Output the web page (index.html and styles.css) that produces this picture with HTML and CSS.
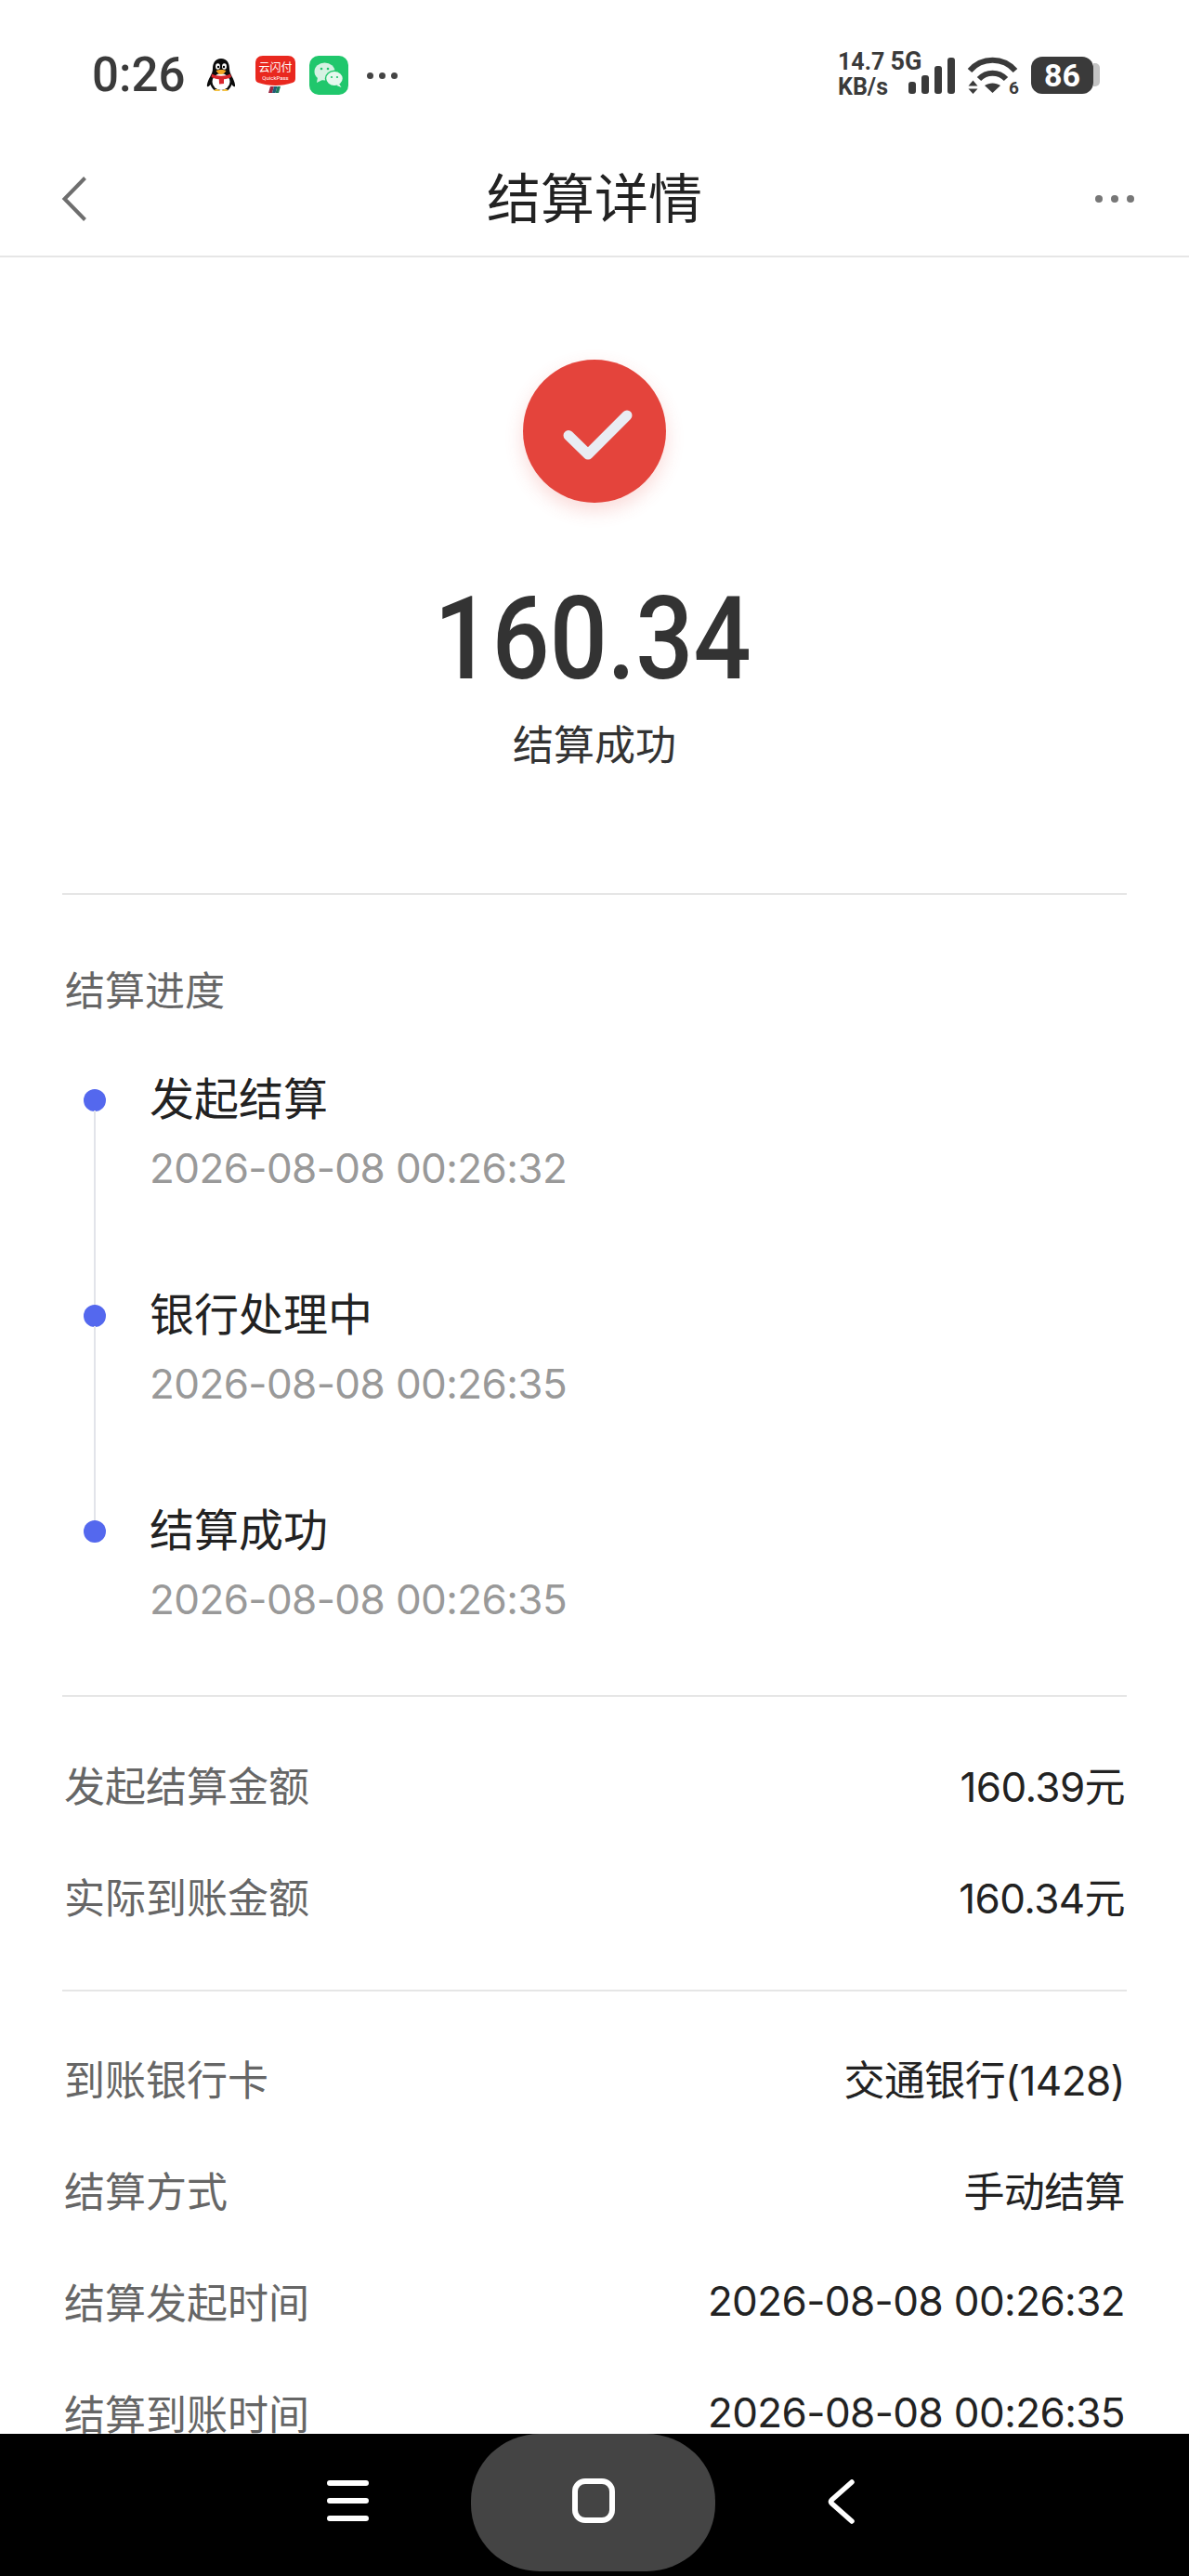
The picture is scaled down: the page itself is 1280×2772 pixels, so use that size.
FILE: index.html
```html
<!DOCTYPE html>
<html lang="zh-CN">
<head>
<meta charset="utf-8">
<title>结算详情</title>
<link rel="stylesheet" href="styles.css">
</head>
<body>
<div class="app">
  <div class="status">
    <span class="time">0:26</span>
    <svg class="ic-qq" viewBox="0 0 32 36" width="32" height="36">
      <path d="M16 0C9.500 0 7 5 7 11c0 3-1 5-3 9-2 3.500-3.500 8-3 10 1 1 2.500-.5 3.500-2 1 3 3 5 4 6h15c1-1 3-3 4-6 1 1.500 2.500 3 3.500 2 .5-2-1-6.500-3-10-2-4-3-6-3-9C25 5 22.500 0 16 0z" fill="#0c0c0c"/>
      <ellipse cx="16" cy="25" rx="9.500" ry="9" fill="#fff"/>
      <ellipse cx="12.500" cy="8.500" rx="2.400" ry="3.200" fill="#fff"/>
      <ellipse cx="19.500" cy="8.500" rx="2.400" ry="3.200" fill="#fff"/>
      <circle cx="13" cy="9" r="1.200" fill="#000"/>
      <circle cx="19" cy="9" r="1.200" fill="#000"/>
      <path d="M10.500 13c3-1.500 8-1.500 11 0-2 3-3.500 4-5.500 4s-3.500-1-5.500-4z" fill="#f5a623"/>
      <path d="M6 16.500c6 3 14 3 20 0l1 3.500c-3 1.500-5 2-8 2.200V27l-5 .5-.2-5.300c-3-.2-6-1-8.300-2.200z" fill="#d9252c"/>
      <path d="M9 33.500c2-1 5-.5 6 1.500H8.500zM23 33.500c-2-1-5-.5-6 1.500h6.500z" fill="#f6c343"/>
    </svg>
    <svg class="ic-ysf" viewBox="0 0 43 40" width="43" height="40">
      <path d="M8 0h27c5 0 8 3 8 8v16c0 3-1 4-3 5-6 2-12 3-18.500 3S9 31 3 29c-2-1-3-2-3-5V8c0-5 3-8 8-8z" fill="#e9281f"/>
      <text x="21.500" y="17" class="ysf-cn">云闪付</text>
      <text x="21.500" y="26" class="ysf-en">QuickPass</text>
      <path d="M16 33h4l-2 7h-4z" fill="#9c2742"/>
      <path d="M20 33h3.500l-2 7H18z" fill="#1f5c78"/>
      <path d="M23.500 33H27l-2 7h-3.500z" fill="#1f7a5c"/>
    </svg>
    <svg class="ic-wx" viewBox="0 0 42 42" width="42" height="42">
      <rect width="42" height="42" rx="10" fill="#20c76c"/>
      <ellipse cx="16.500" cy="17" rx="11" ry="9.500" fill="#d6f2e3"/>
      <path d="M9 23l-1 6 6-3z" fill="#d6f2e3"/>
      <ellipse cx="27" cy="24.500" rx="9.500" ry="8.200" fill="#e6f8ee" stroke="#20c76c" stroke-width="1.500"/>
      <path d="M32 30l2.500 4-5-2z" fill="#e6f8ee"/>
      <circle cx="13" cy="14" r="1.300" fill="#20c76c"/>
      <circle cx="20" cy="14" r="1.300" fill="#20c76c"/>
      <circle cx="24" cy="23" r="1.100" fill="#20c76c"/>
      <circle cx="30" cy="23" r="1.100" fill="#20c76c"/>
    </svg>
    <span class="more-dots"><i></i><i></i><i></i></span>
    <span class="spacer"></span>
    <span class="speed"><b>14.7 <span class="net">5G</span></b><b>KB/s</b></span>
    <span class="signal"><i class="s1"></i><i class="s2"></i><i class="s3"></i><i class="s4"></i></span>
    <svg class="ic-wifi" viewBox="0 0 53 40" width="53" height="40">
      <path d="M2 15C15 0 38 0 51 15" fill="none" stroke="#3a3a3a" stroke-width="6"/>
      <path d="M12 24c8-8.500 21-8.500 29 0" fill="none" stroke="#3a3a3a" stroke-width="6"/>
      <path d="M18 31c5-3.500 12-3.500 17 0l-8.500 8z" fill="#3a3a3a"/>
      <path d="M5.500 25.500L10.500 31.500H.5zM.5 34.500h10L5.500 40z" fill="#3a3a3a"/>
      <text x="44" y="40" class="wifi-six">6</text>
    </svg>
    <span class="battery"><span class="batt-body">86</span><span class="batt-cap"></span></span>
  </div>

  <header class="topbar">
    <div class="tb-left">
      <svg viewBox="0 0 28 50" width="28" height="50"><path d="M25.500 2.500L3.500 25l22 22.500" fill="none" stroke="#6e6e6e" stroke-width="4"/></svg>
    </div>
    <h1 class="title">结算详情</h1>
    <div class="tb-right"><i></i><i></i><i></i></div>
  </header>

  <main class="content">
    <section class="hero">
      <div class="check">
        <svg viewBox="0 0 154 154" width="154" height="154">
          <path d="M49 81.500L70 102l42-42" fill="none" stroke="#e9ecf3" stroke-width="11" stroke-linecap="round" stroke-linejoin="round"/>
        </svg>
      </div>
      <div class="amount"><span>160.34</span></div>
      <div class="sub">结算成功</div>
    </section>

    <section class="progress">
      <h2 class="sec-title">结算进度</h2>
      <ol class="timeline">
        <li class="step">
          <div class="marker"><span class="dot"></span><span class="line"></span></div>
          <div class="step-body"><div class="step-name">发起结算</div><div class="step-time">2026-08-08 00:26:32</div></div>
        </li>
        <li class="step">
          <div class="marker"><span class="dot"></span><span class="line"></span></div>
          <div class="step-body"><div class="step-name">银行处理中</div><div class="step-time">2026-08-08 00:26:35</div></div>
        </li>
        <li class="step">
          <div class="marker"><span class="dot"></span></div>
          <div class="step-body"><div class="step-name">结算成功</div><div class="step-time">2026-08-08 00:26:35</div></div>
        </li>
      </ol>
    </section>

    <section class="details first">
      <div class="row"><span class="label">发起结算金额</span><span class="value">160.39元</span></div>
      <div class="row"><span class="label">实际到账金额</span><span class="value">160.34元</span></div>
    </section>

    <section class="details last">
      <div class="row"><span class="label">到账银行卡</span><span class="value">交通银行(1428)</span></div>
      <div class="row"><span class="label">结算方式</span><span class="value">手动结算</span></div>
      <div class="row"><span class="label">结算发起时间</span><span class="value">2026-08-08 00:26:32</span></div>
      <div class="row"><span class="label">结算到账时间</span><span class="value">2026-08-08 00:26:35</span></div>
    </section>
  </main>

  <nav class="navbar">
    <svg viewBox="0 0 45 44" width="45" height="44"><path d="M3 3h39M3 22h39M3 41h39" stroke="#fff" stroke-width="6" stroke-linecap="round" fill="none"/></svg>
    <div class="pill">
      <svg viewBox="0 0 46 48" width="46" height="48"><rect x="3" y="3" width="40" height="42" rx="11" fill="none" stroke="#fff" stroke-width="6"/></svg>
    </div>
    <svg viewBox="0 0 30 48" width="30" height="48"><path d="M27 3L5.500 22c-1.500 1.300-1.500 2.700 0 4L27 45" fill="none" stroke="#fff" stroke-width="5.500" stroke-linecap="round"/></svg>
  </nav>
</div>
</body>
</html>
```

FILE: styles.css
```css
* { box-sizing: border-box; }
html, body { margin: 0; padding: 0; background: #fff; }
body { font-family: "Inter", "Noto Sans CJK SC", sans-serif; color: #222; }
.app { width: 1280px; height: 2772px; display: flex; flex-direction: column; overflow: hidden; }

/* status bar */
.status { height: 120px; flex: none; display: flex; align-items: center; padding: 40px 96px 0 100px; color: #3a3a3a; }
.time { font-family: "Roboto", sans-serif; font-weight: 500; font-size: 51px; line-height: 60px; width: 96px; margin-top: 2px; margin-left: -1px; margin-right: 1px; }
.ic-qq { margin-left: 26px; margin-top: 2px; }
.ic-ysf { margin-left: 21px; }
.ic-wx { margin-left: 15px; margin-top: 2px; }
.ysf-cn { font: 400 12px "Noto Sans CJK SC", sans-serif; fill: #fff; text-anchor: middle; }
.ysf-en { font: 400 6px "Roboto", sans-serif; fill: #fff; text-anchor: middle; }
.more-dots { display: flex; gap: 6px; margin-left: 20px; margin-top: 2px; }
.more-dots i { width: 7px; height: 7px; border-radius: 50%; background: #444; }
.spacer { flex: 1; }
.speed { display: flex; flex-direction: column; width: 92px; margin-left: -2px; margin-right: 2px; font-family: "Roboto", sans-serif; }
.speed b { font-weight: 700; font-size: 25px; line-height: 27px; white-space: nowrap; }
.net { font-size: 27px; }
.signal { display: flex; align-items: flex-end; gap: 6px; height: 39px; margin: 2px 0 0 -18px; }
.signal i { width: 8px; border-radius: 3px; background: #3a3a3a; }
.s1 { height: 13px; }
.s2 { height: 20px; }
.s3 { height: 30px; }
.s4 { height: 39px; }
.ic-wifi { margin-left: 14px; margin-top: 2px; overflow: visible; }
.wifi-six { font: 700 19px "Roboto", sans-serif; fill: #3a3a3a; }
.battery { display: flex; align-items: center; margin-left: 15px; margin-top: 1px; }
.batt-body { width: 67px; height: 40px; border-radius: 12px; background: #3a3a3a; color: #fff; font: 700 34px/40px "Roboto", sans-serif; text-align: center; }
.batt-cap { width: 7px; height: 25px; background: #c4c4c4; border-radius: 0 5px 5px 0; }

/* top bar */
.topbar { height: 157px; flex: none; display: grid; grid-template-columns: 1fr auto 1fr; align-items: center; padding: 32px 59px 0; border-bottom: 2px solid #e6e6e6; }
.tb-left { display: flex; margin-left: 7px; }
.title { margin: -8px 0 0; font-family: "Noto Sans CJK SC", sans-serif; font-weight: 400; font-size: 58px; line-height: 80px; color: #222; }
.tb-right { display: flex; justify-content: flex-end; gap: 9px; }
.tb-right i { width: 8px; height: 8px; border-radius: 50%; background: #777; }

/* content */
.content { flex: 1; min-height: 0; overflow: hidden; font-family: "Noto Sans CJK SC", sans-serif; }
.hero { margin: 0 67px; height: 686px; padding-top: 110px; display: flex; flex-direction: column; align-items: center; border-bottom: 2px solid #e6e6e6; }
.check { width: 154px; height: 154px; border-radius: 50%; background: #e4443c; box-shadow: 0 8px 20px rgba(228, 68, 60, .2); }
.check svg { display: block; }
.amount { height: 130px; margin: 82px 5px 0 0; font-family: "Roboto", sans-serif; font-weight: 500; font-size: 125px; line-height: 130px; color: #333; }
.amount span { display: inline-block; transform: scaleX(.875); }
.sub { height: 60px; margin-top: 16px; font-size: 44px; line-height: 60px; color: #333; }

.progress { margin: 0 67px; padding: 70px 0 73px; border-bottom: 2px solid #e6e6e6; }
.sec-title { margin: 0 0 59px; padding-left: 3px; font-weight: 400; font-size: 43px; line-height: 60px; color: #666; }
.timeline { list-style: none; margin: 0; padding: 0; }
.step { display: flex; }
.marker { width: 24px; margin-left: 23px; padding-top: 20px; display: flex; flex-direction: column; align-items: center; }
.dot { width: 24px; height: 24px; flex: none; border-radius: 50%; background: #5468ee; }
.line { flex: 1; width: 2px; background: #e2e4ea; margin-top: -1px; margin-bottom: -21px; }
.step-body { margin: -5px 0 0 47px; padding-bottom: 97px; }
.step:last-child .step-body { padding-bottom: 0; }
.step-name { font-size: 48px; line-height: 64px; color: #222; }
.step-time { margin-top: 16px; font-family: "Inter", sans-serif; font-size: 44px; letter-spacing: -.6px; line-height: 60px; color: #999; white-space: nowrap; }

.details { margin: 0 67px; }
.details.first { padding: 34px 0 41px; border-bottom: 2px solid #e6e6e6; }
.details.last { padding-top: 33px; }
.row { height: 120px; display: flex; align-items: center; justify-content: space-between; padding: 0 2px; font-size: 44px; }
.label { color: #666; }
.value { color: #222; font-family: "Inter", "Noto Sans CJK SC", sans-serif; font-size: 44px; letter-spacing: -.6px; white-space: nowrap; }

/* nav */
.navbar { height: 153px; flex: none; background: #000; display: flex; align-items: flex-start; overflow: hidden; padding-left: 352px; }
.navbar > svg:first-child { margin-top: 50px; }
.navbar > svg:last-child { margin: 49px 0 0 120px; }
.pill { width: 263px; height: 148px; margin-left: 110px; border-radius: 74px / 72px; background: #444; display: flex; align-items: center; justify-content: center; padding-bottom: 4px; }
```
